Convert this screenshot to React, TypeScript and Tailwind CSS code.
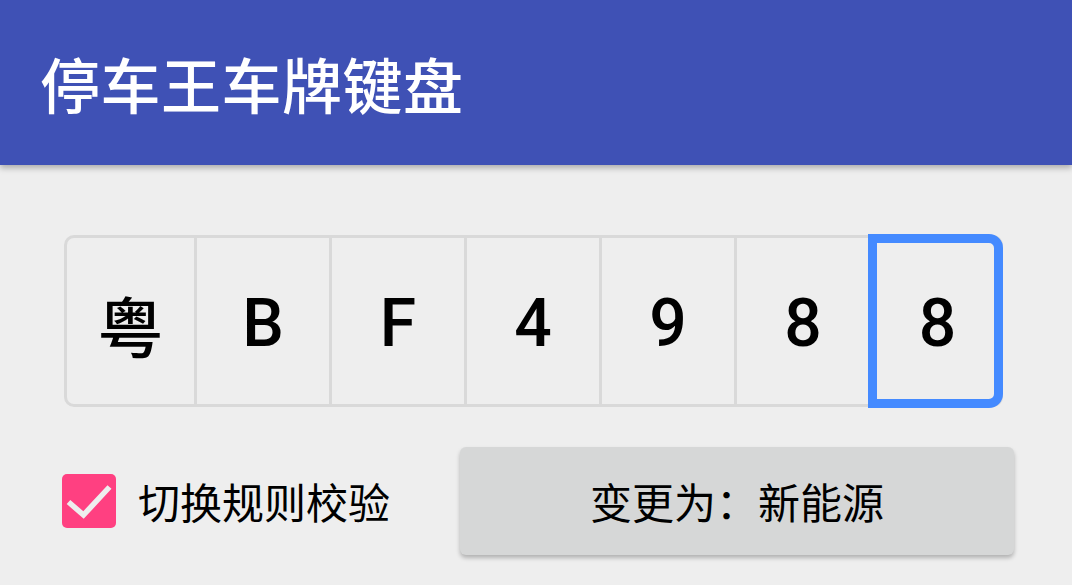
import React from "react";

const cjk = { fontFamily: '"Noto Sans CJK SC", "Noto Sans", sans-serif' };
const plateFont = { fontFamily: 'Roboto, "Noto Sans CJK SC", sans-serif' };

const chars = ["粤", "B", "F", "4", "9", "8", "8"];

export default function App() {
  return (
    <div className="w-[1072px] h-[585px] bg-[#eeeeee] overflow-hidden" style={cjk}>
      <div className="relative z-10 h-[165px] bg-[#3f51b5] flex items-center pl-[40px] shadow-[0_3px_6px_rgba(0,0,0,0.28)]">
        <span className="text-white text-[60px] leading-none font-medium tracking-[0.5px]">停车王车牌键盘</span>
      </div>

      <div className="mt-[70px] ml-[64px] w-[939px] h-[172px] border-[3px] border-[#d9d9d9] rounded-[10px] flex relative">
        {chars.map((c, i) => {
          const w = i === 0 ? "w-[130px]" : i === 6 ? "w-[131px]" : "w-[135px]";
          return (
            <div
              key={i}
              className={`${w} shrink-0 h-full flex items-center justify-center pt-[5px] text-black text-[66px] leading-none font-medium ${i < 6 ? "border-r-[3px] border-[#d9d9d9]" : ""}`}
              style={c === "粤" ? cjk : plateFont}
            >
              {c}
            </div>
          );
        })}
        <div className="absolute top-[-4px] bottom-[-4px] right-[-3px] w-[135px] border-[9px] border-[#448aff] rounded-r-[14px]" />
      </div>

      <div className="mt-[40px] flex items-center justify-between pl-[62px] pr-[58px]">
        <div className="flex items-center gap-[22px]">
          <div className="w-[54px] h-[54px] rounded-[5px] bg-[#ff4081] flex items-center justify-center">
            <svg width="54" height="54" viewBox="0 0 54 54">
              <path d="M6.5 28 L21.5 41 L47.5 13" fill="none" stroke="#eeeeee" strokeWidth="5.5" />
            </svg>
          </div>
          <span className="text-[42px] leading-none text-black">切换规则校验</span>
        </div>
        <div className="w-[554px] h-[108px] bg-[#d6d7d7] rounded-[6px] shadow-[0_3px_4px_rgba(0,0,0,0.25)] flex items-center justify-center">
          <span className="text-[42px] leading-none text-black">变更为：新能源</span>
        </div>
      </div>
    </div>
  );
}
